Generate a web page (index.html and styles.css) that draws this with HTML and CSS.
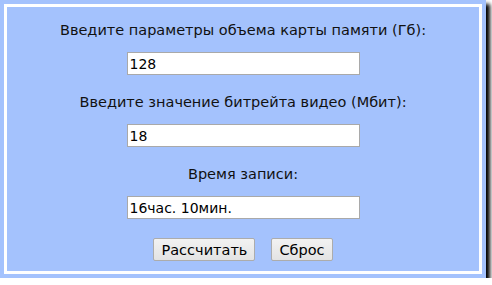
FILE: index.html
```html
<!DOCTYPE html>
<html lang="ru">
<head>
    <meta charset="UTF-8">
    <title>Калькулятор записи</title>
    <link rel="stylesheet" href="styles.css">
</head>
<body>
    <div class="frame">
        <form class="calc">
            <p class="calc-label">Введите параметры объема карты памяти (Гб):</p>
            <input type="text" class="calc-field" value="128">
            <p class="calc-label">Введите значение битрейта видео (Мбит):</p>
            <input type="text" class="calc-field" value="18">
            <p class="calc-label">Время записи:</p>
            <input type="text" class="calc-field" value="16час. 10мин.">
            <div class="calc-buttons">
                <button type="button" class="calc-button">Рассчитать</button>
                <button type="reset" class="calc-button">Сброс</button>
            </div>
        </form>
    </div>
</body>
</html>
```

FILE: styles.css
```css
* {
    margin: 0;
    padding: 0;
    box-sizing: border-box;
}

body {
    font-family: "DejaVu Sans", Verdana, sans-serif;
    background: #fff;
    color: #111;
}

.frame {
    width: 486px;
    height: 278px;
    padding: 4px;
    background: #a4c2fd;
    box-shadow: 4px 4px 4px #000;
}

.calc {
    height: 100%;
    border: 3px solid #fff;
    display: flex;
    flex-direction: column;
    align-items: center;
    padding-top: 15px;
}

.calc-label {
    font-size: 14.5px;
    line-height: 17px;
    margin-bottom: 13px;
}

.calc-field {
    width: 233px;
    height: 23px;
    margin-bottom: 19px;
    padding: 0 2px;
    border: 1px solid #a9a9a9;
    background: #fff;
    font-family: "DejaVu Sans", Verdana, sans-serif;
    font-size: 14px;
    color: #000;
}

.calc-buttons {
    display: flex;
    gap: 16px;
}

.calc-button {
    height: 23px;
    padding: 0 7px;
    border: 1px solid #acacac;
    border-radius: 2px;
    background: linear-gradient(#f2f2f2, #e3e3e3);
    font-family: "DejaVu Sans", Verdana, sans-serif;
    font-size: 14.5px;
    color: #000;
}
```
